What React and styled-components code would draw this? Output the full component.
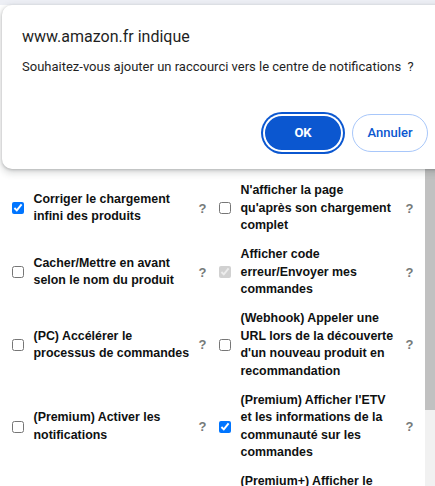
import React from "react";
import styled, { createGlobalStyle } from "styled-components";

const GlobalStyle = createGlobalStyle`
    html, body {
        margin: 0;
        padding: 0;
        background: #ffffff;
        overflow: hidden;
    }
`;

const rows = [
    {
        left: { label: "Corriger le chargement infini des produits", checked: true },
        right: { label: "N'afficher la page qu'après son chargement complet" },
    },
    {
        left: { label: "Cacher/Mettre en avant selon le nom du produit" },
        right: { label: "Afficher code erreur/Envoyer mes commandes", checked: true, disabled: true },
    },
    {
        left: { label: "(PC) Accélérer le processus de commandes" },
        right: { label: "(Webhook) Appeler une URL lors de la découverte d'un nouveau produit en recommandation" },
    },
    {
        left: { label: "(Premium) Activer les notifications" },
        right: { label: "(Premium) Afficher l'ETV et les informations de la communauté sur les commandes", checked: true },
    },
    {
        left: { label: "(Premium+) Mode sombre" },
        right: { label: "(Premium+) Afficher le partage automatique des commandes avec la communauté" },
    },
];

function Option({ label, checked, disabled, indent }) {
    return (
        <OptionStyles $indent={indent}>
            <input type="checkbox" defaultChecked={checked} disabled={disabled} />
            <span className="label">{label}</span>
            <span className="help">?</span>
        </OptionStyles>
    );
}

function App() {
    return (
        <Screen>
            <GlobalStyle />
            <TopStrip />
            <Body>
                <Page>
                    {rows.map((row, i) => (
                        <Row key={i}>
                            <Option {...row.left} indent={12} />
                            <Option {...row.right} indent={14} />
                        </Row>
                    ))}
                </Page>
                <ScrollTrack>
                    <div className="thumb" />
                </ScrollTrack>
            </Body>

            <Dialog>
                <h1>www.amazon.fr indique</h1>
                <p>Souhaitez-vous ajouter un raccourci vers le centre de notifications{"\u00a0 "}?</p>
                <div className="actions">
                    <Button $primary>OK</Button>
                    <Button>Annuler</Button>
                </div>
            </Dialog>
        </Screen>
    );
}

const Screen = styled.div`
    position: relative;
    width: 435px;
    height: 486px;
    display: flex;
    flex-direction: column;
    overflow: hidden;
`;

const TopStrip = styled.div`
    height: 5px;
    flex: none;
    background: #edeff5;
`;

const Body = styled.div`
    flex: 1;
    display: flex;
    min-height: 0;
`;

const Page = styled.div`
    flex: 1;
    padding-top: 171.5px;
    font-family: "Liberation Sans", Arial, sans-serif;
    font-weight: 700;
    font-size: 12.4px;
    line-height: 17.6px;
    color: #0f1111;
`;

const Row = styled.div`
    display: grid;
    grid-template-columns: 205px 1fr;
    padding: 5.6px 0;
`;

const OptionStyles = styled.div`
    display: grid;
    grid-template-columns: 12px 156px 15px;
    column-gap: 10px;
    align-items: center;
    padding-left: ${(p) => p.$indent}px;
    input{
        width: 12px;
        height: 12px;
        margin: 0;
    }
    .label{
        margin-left: -0.5px;
    }
    .help{
        margin-left: -10px;
        text-align: center;
        color: #767a7a;
        font-size: 13px;
    }
`;

const ScrollTrack = styled.div`
    width: 10px;
    flex: none;
    background: #f1f1f1;
    .thumb{
        margin-top: 60px;
        height: 345px;
        background: #c1c1c1;
    }
`;

const Dialog = styled.div`
    position: absolute;
    left: 2px;
    top: 5px;
    width: 446px;
    height: 164px;
    box-sizing: border-box;
    padding: 22px 20px 0 20px;
    background: #ffffff;
    border-radius: 10px;
    box-shadow: 0 1px 3px rgba(60, 64, 67, 0.3), 0 3px 6px 2px rgba(60, 64, 67, 0.15);
    font-family: Roboto, "Segoe UI", sans-serif;
    h1{
        margin: 0;
        font-size: 16px;
        line-height: 20px;
        font-weight: 400;
        color: #1f1f1f;
    }
    p{
        margin: 12px 0 0;
        font-size: 13px;
        line-height: 16px;
        color: #1f1f1f;
    }
    .actions{
        display: flex;
        justify-content: flex-end;
        align-items: center;
        gap: 9px;
        margin-top: 38.5px;
    }
`;

const Button = styled.button`
    height: 38px;
    width: ${(p) => (p.$primary ? "80px" : "76px")};
    border-radius: 19px;
    font-family: Roboto, "Segoe UI", sans-serif;
    font-size: 13px;
    font-weight: ${(p) => (p.$primary ? 700 : 500)};
    cursor: pointer;
    color: ${(p) => (p.$primary ? "#ffffff" : "#0b57d0")};
    background: ${(p) => (p.$primary ? "#0b57d0" : "#ffffff")};
    border: ${(p) => (p.$primary ? "none" : "1px solid #a8c7fa")};
    box-shadow: ${(p) => (p.$primary ? "0 0 0 2px #0b57d0, inset 0 0 0 2px #ffffff" : "none")};
    padding: 0;
`;

export default App;
